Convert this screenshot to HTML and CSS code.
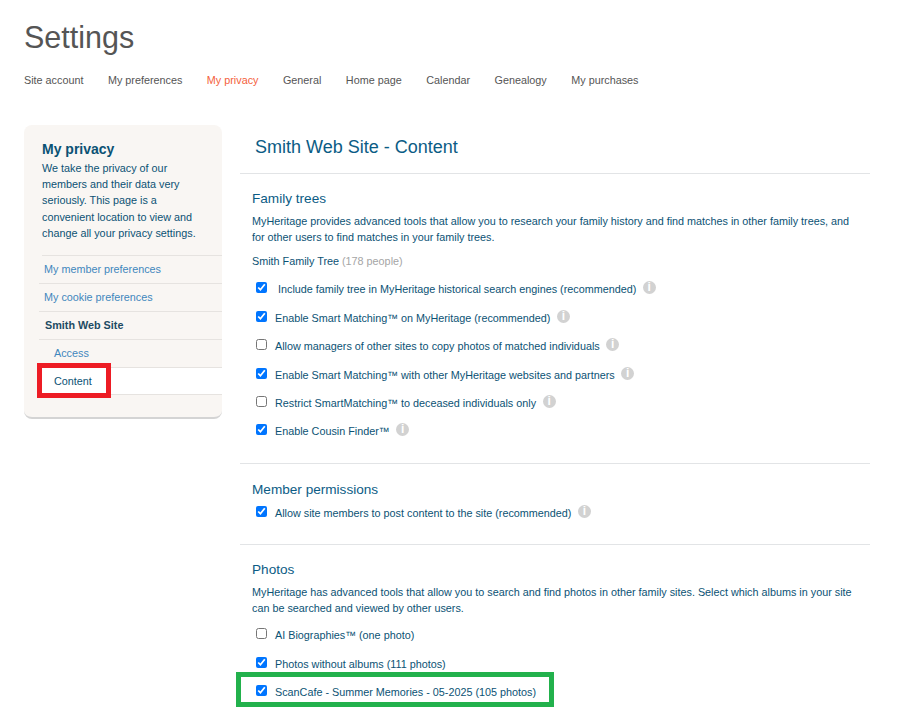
FILE: index.html
```html
<!DOCTYPE html>
<html lang="en">
<head>
<meta charset="utf-8">
<title>Settings</title>
<link rel="stylesheet" href="styles.css">
</head>
<body>
<div class="page">
  <h1 class="title">Settings</h1>
  <nav class="tabs">
    <a>Site account</a><a>My preferences</a><a class="on">My privacy</a><a>General</a><a>Home page</a><a>Calendar</a><a>Genealogy</a><a>My purchases</a>
  </nav>
  <div class="cols">
    <aside class="side">
      <div class="intro">
        <h2>My privacy</h2>
        <p>We take the privacy of our members and their data very seriously. This page is a convenient location to view and change all your privacy settings.</p>
      </div>
      <ul class="menu">
        <li><a>My member preferences</a></li>
        <li><a>My cookie preferences</a></li>
        <li class="head">Smith Web Site</li>
        <li class="sub"><a>Access</a></li>
        <li class="sub cur">Content<span class="mark-red"></span></li>
      </ul>
    </aside>
    <main class="main">
      <h2 class="site">Smith Web Site - Content</h2>
      <section class="sec first">
        <h3>Family trees</h3>
        <p>MyHeritage provides advanced tools that allow you to research your family history and find matches in other family trees, and for other users to find matches in your family trees.</p>
        <div class="tree">Smith Family Tree <span>(178 people)</span></div>
        <label class="row"><input type="checkbox" checked><span class="txt pad">Include family tree in MyHeritage historical search engines (recommended)</span><i class="inf">i</i></label>
        <label class="row"><input type="checkbox" checked><span class="txt">Enable Smart Matching™ on MyHeritage (recommended)</span><i class="inf">i</i></label>
        <label class="row"><input type="checkbox"><span class="txt">Allow managers of other sites to copy photos of matched individuals</span><i class="inf">i</i></label>
        <label class="row"><input type="checkbox" checked><span class="txt">Enable Smart Matching™ with other MyHeritage websites and partners</span><i class="inf">i</i></label>
        <label class="row"><input type="checkbox"><span class="txt">Restrict SmartMatching™ to deceased individuals only</span><i class="inf">i</i></label>
        <label class="row"><input type="checkbox" checked><span class="txt">Enable Cousin Finder™</span><i class="inf">i</i></label>
      </section>
      <section class="sec perm">
        <h3>Member permissions</h3>
        <label class="row"><input type="checkbox" checked><span class="txt">Allow site members to post content to the site (recommended)</span><i class="inf">i</i></label>
      </section>
      <section class="sec photos">
        <h3>Photos</h3>
        <p>MyHeritage has advanced tools that allow you to search and find photos in other family sites. Select which albums in your site can be searched and viewed by other users.</p>
        <label class="row"><input type="checkbox"><span class="txt">AI Biographies™ (one photo)</span></label>
        <label class="row"><input type="checkbox" checked><span class="txt">Photos without albums (111 photos)</span></label>
        <label class="row"><input type="checkbox" checked><span class="txt">ScanCafe - Summer Memories - 05-2025 (105 photos)</span><span class="mark-green"></span></label>
      </section>
    </main>
  </div>
</div>
</body>
</html>
```
FILE: styles.css
```css
* { box-sizing: border-box; }
html, body { margin: 0; padding: 0; background: #fff; overflow: hidden; height: 721px; }
body { font-family: "Liberation Sans", Arial, sans-serif; font-size: 10.8px; color: #0b5274; }
.page { padding: 0 31px 0 24px; }
.title { margin: 0; padding-top: 19px; font-size: 30.5px; line-height: 36px; font-weight: 400; color: #555; }
.tabs { display: flex; gap: 24.5px; margin-top: 17px; line-height: 16px; color: #555; }
.tabs .on { color: #f4613c; }
.cols { display: flex; margin-top: 37px; align-items: flex-start; }
.side { width: 198px; height: 294px; flex: none; background: #f9f6f3; border-radius: 8px; border-bottom: 2px solid #d4d4d4; padding-top: 16px; }
.intro { padding: 0 0 0 18px; }
.intro h2 { margin: 0; font-size: 14px; line-height: 16px; color: #0b5274; }
.intro p { margin: 3px 0 0; padding: 0 18px 14px 0; line-height: 16.2px; border-bottom: 1px solid #e6e3e0; }
.menu { list-style: none; margin: 0; padding: 0 0 0 15px; }
.menu li { height: 28px; line-height: 27px; border-top: 1px solid #e6e3e0; padding-left: 5px; }
.menu li:first-child { border-top: 0; height: 27px; }
.menu li a { color: #3f87bd; }
.menu .head { font-weight: 700; padding-left: 6px; color: #1d4b63; }
.menu .sub { padding-left: 15px; position: relative; }
.menu .cur { background: #fff; color: #0b5274; border-bottom: 1px solid #e6e3e0; }
.mark-red { position: absolute; left: -2px; top: -5px; width: 74px; height: 35px; border: 5px solid #ed1c24; }
.main { flex: 1; margin-left: 18px; }
.site { margin: 0; padding: 11px 0 0 15px; height: 49px; font-size: 18px; line-height: 22px; font-weight: 400; color: #0b5c85; border-bottom: 1px solid #e2e4e6; }
.sec { padding: 0 0 0 12px; border-bottom: 1px solid #e2e4e6; }
.sec h3 { margin: 0; font-size: 13.6px; line-height: 18px; font-weight: 400; color: #0b5c85; }
.sec p { margin: 5px 0 0; line-height: 16px; max-width: 606px; }
.first { padding-top: 16px; height: 290px; }
.tree { margin-top: 8px; line-height: 16px; height: 16px; }
.tree span { color: #a5a5a5; }
.row { display: flex; align-items: flex-start; position: relative; height: 28.4px; }
.first .tree + .row { margin-top: 8.4px; }
.row input { margin: 5px 0 0 4px; width: 11px; height: 11px; flex: none; }
.txt { margin-left: 8px; line-height: 16px; padding-top: 4px; }
.txt.pad { margin-left: 11px; }
.inf { width: 13px; height: 13px; margin: 4px 0 0 6.5px; border-radius: 50%; background: #d2d2d2; color: #fff; font: 700 12px/13px "Liberation Sans", sans-serif; font-style: normal; text-align: center; }
.perm { padding-top: 17px; height: 81px; }
.perm h3 + .row { margin-top: 2px; }
.photos { padding-top: 16px; border-bottom: 0; }
.photos p + .row { margin-top: 7.4px; }
.mark-green { position: absolute; left: -16px; top: -8.4px; width: 318px; height: 35px; border: 5px solid #22b14c; }
```
